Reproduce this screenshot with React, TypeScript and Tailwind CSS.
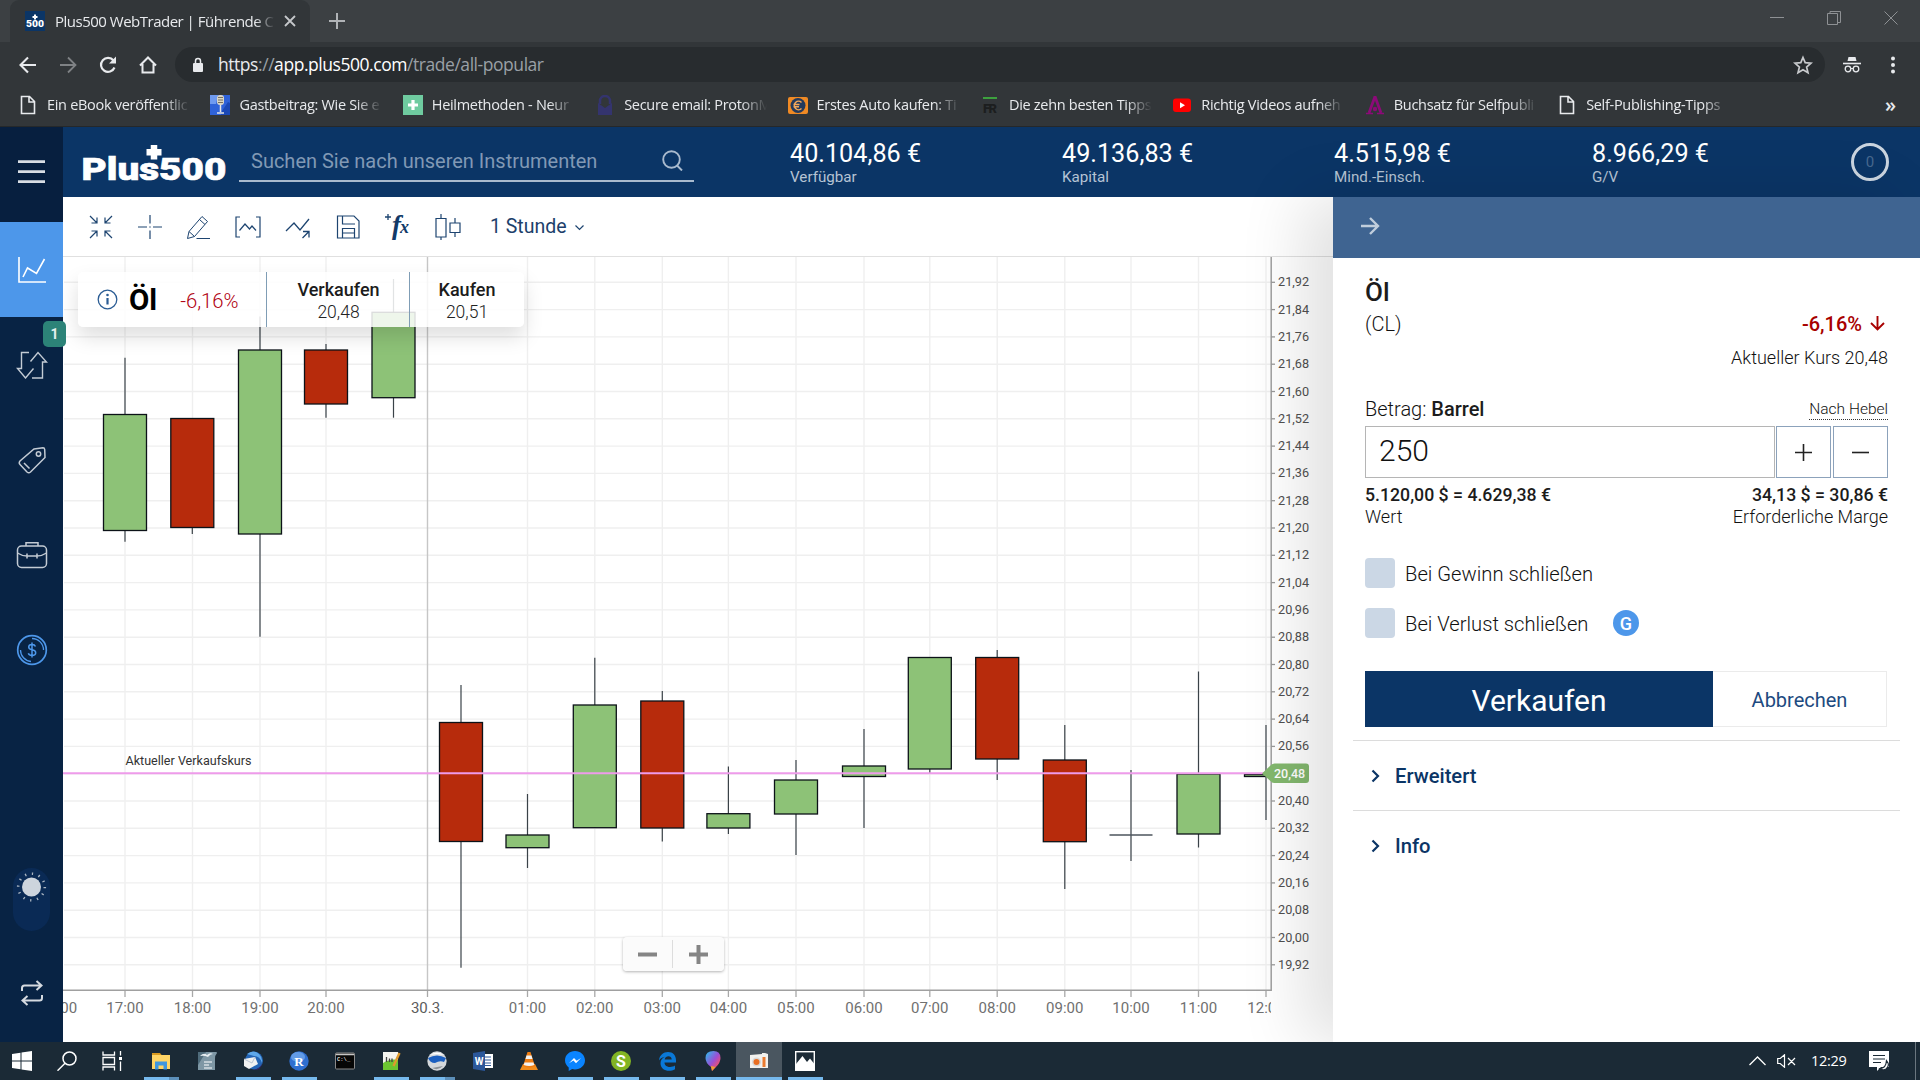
import React from "react";

type Candle = { x: number; top: number; bot: number; high: number; low: number; up: boolean };

const candles: Candle[] = [
  { x: 125, top: 414.5, bot: 530.5, high: 357.7, low: 541.7, up: true },
  { x: 192.3, top: 418.5, bot: 527.5, high: 418.5, low: 534, up: false },
  { x: 260, top: 350, bot: 534, high: 316.5, low: 636.7, up: true },
  { x: 326, top: 350, bot: 404, high: 344, low: 417.7, up: false },
  { x: 393.5, top: 312.3, bot: 397.7, high: 279, low: 417.7, up: true },
  { x: 461, top: 722.5, bot: 841.5, high: 685, low: 967.7, up: false },
  { x: 527.5, top: 835, bot: 847.7, high: 794, low: 868, up: true },
  { x: 594.8, top: 705, bot: 827.7, high: 657.7, low: 827.7, up: true },
  { x: 662.3, top: 701, bot: 828, high: 691, low: 841.5, up: false },
  { x: 728.4, top: 813.7, bot: 828, high: 766.5, low: 834, up: true },
  { x: 796, top: 780, bot: 814, high: 760, low: 855, up: true },
  { x: 864, top: 766, bot: 776.5, high: 729, low: 828, up: true },
  { x: 929.8, top: 657.5, bot: 769, high: 657.5, low: 773, up: true },
  { x: 997.2, top: 657.5, bot: 759, high: 650, low: 780, up: false },
  { x: 1064.8, top: 760, bot: 841.7, high: 725, low: 889, up: false },
  { x: 1131, top: 835, bot: 835, high: 770, low: 861, up: true },
  { x: 1198.5, top: 774, bot: 834, high: 671.5, low: 847.5, up: true },
  { x: 1266, top: 774.5, bot: 776.5, high: 725, low: 820, up: true },
];

const hours: [number, string][] = [
  [58.5, "16:00"], [125, "17:00"], [192.5, "18:00"], [260, "19:00"], [326, "20:00"], [427.5, "30.3."],
  [527.5, "01:00"], [594.8, "02:00"], [662.3, "03:00"], [728.4, "04:00"], [796, "05:00"],
  [864, "06:00"], [929.8, "07:00"], [997.2, "08:00"], [1064.8, "09:00"], [1131, "10:00"],
  [1198.5, "11:00"], [1266, "12:00"],
];

const prices = Array.from({ length: 26 }, (_, i) => ({
  y: 282.3 + i * 27.3,
  label: (21.92 - i * 0.08).toFixed(2).replace(".", ","),
}));

function Chart() {
  return (
    <svg width="1270" height="785" viewBox="63 257 1270 785" className="block" fontFamily="Roboto, sans-serif">
      <defs>
        <clipPath id="plot"><rect x="63" y="257" width="1208" height="785" /></clipPath>
      </defs>
      <g clipPath="url(#plot)">
        {prices.map((p) => (
          <line key={p.label} x1="64" x2="1271" y1={p.y} y2={p.y} stroke="#efefef" strokeWidth="1.4" />
        ))}
        {hours.slice(1).map(([x, l]) => (
          <line key={l} x1={x} x2={x} y1="257" y2="990" stroke={l === "30.3." ? "#c6c6c6" : "#efefef"} strokeWidth="1.4" />
        ))}
        {hours.slice(1).map(([x, l]) => (
          <line key={l} x1={x} x2={x} y1="990" y2="997" stroke="#a8a8a8" strokeWidth="1.3" />
        ))}
        {hours.map(([x, l]) => (
          <text key={l} x={x} y="1013" fontSize="15" textAnchor="middle" fill={l === "30.3." ? "#5c5c5c" : "#707070"}>{l}</text>
        ))}
        {candles.map((c) => (
          <g key={c.x} stroke="#0c1218">
            <line x1={c.x} x2={c.x} y1={c.high} y2={c.low} strokeWidth="1.2" stroke="#3a4248" />
            {c.top === c.bot ? (
              <line x1={c.x - 21.5} x2={c.x + 21.5} y1={c.top} y2={c.top} strokeWidth="1.4" stroke="#4d555c" />
            ) : (
              <rect x={c.x - 21.5} y={c.top} width="43" height={c.bot - c.top} fill={c.up ? "#8dc277" : "#b72b0c"} strokeWidth="1.3" />
            )}
          </g>
        ))}
        <line x1="63" x2="1271" y1="773.3" y2="773.3" stroke="#ee9bea" strokeWidth="2.1" />
      </g>
      <text x="125.5" y="765" fontSize="12.5" fill="#333" textLength="126" lengthAdjust="spacingAndGlyphs">Aktueller Verkaufskurs</text>
      <path d="M63 990.3H1271.2V257" fill="none" stroke="#a0a0a0" strokeWidth="1.5" />
      {prices.map((p) => (
        <g key={p.label}>
          <line x1="1271" x2="1275" y1={p.y} y2={p.y} stroke="#9a9a9a" strokeWidth="1.3" />
          {p.label !== "20,48" && <text x="1278" y={p.y + 4} fontSize="12.7" fill="#505050">{p.label}</text>}
        </g>
      ))}
      <path d="M1262 773.5l9-8.5q1.500-1.500 3.500-1.500h31.500q3 0 3 3v13.500q0 3-3 3h-31.500q-2 0-3.500-1.500z" fill="#83b86e" />
      <text x="1274" y="778" fontSize="12.500" fontWeight="500" fill="#fff">20,48</text>
    </svg>
  );
}

function Ico({ children, w = 26, h = 26, sw = 1.3, color = "#1d4470" }: { children: React.ReactNode; w?: number; h?: number; sw?: number; color?: string }) {
  return (
    <svg width={w} height={h} viewBox={`0 0 ${w} ${h}`} fill="none" stroke={color} strokeWidth={sw} className="shrink-0">
      {children}
    </svg>
  );
}

const tools: [string, React.ReactNode][] = [
  ["w-[48.5px]", <Ico><path d="M2 2l6.500 6.500M9 3.500v5.500H3.500M24 2l-6.500 6.500M17 3.500v5.500H22.500M2 24l6.500-6.500M3.500 17h5.500V22.500M24 24l-6.500-6.500M22.500 17h-5.500V22.500" strokeWidth="1.200" /></Ico>],
  ["w-[48.5px]", <Ico><path d="M13 1v8.500M13 16.500V25M1 13h9M16 13h9M12.300 13h1.400" strokeWidth="1.200" /></Ico>],
  ["w-[48.5px]", <Ico><path d="M4 17.500L17 2.500l5.500 5L9.500 22.500l-7 2zM14.500 5.500l5.500 5M4 17.500l5.500 5M11.500 24.500H25" strokeWidth="1" /></Ico>],
  ["w-[50px]", <Ico><path d="M5 3H1v20h4M21 3h4v20h-4M4.500 16.500l5.500-6.500 4.500 5 2.500-3 4 4.500" strokeWidth="1.200" /></Ico>],
  ["w-[50px]", <Ico><path d="M1 17l8-8 6 7L24 5M17.500 24l6-6M18 17.500h6V23.500" /></Ico>],
  ["w-[50px]", <Ico><path d="M2.500 2h16.500l5 5v17H2.500zM7.500 2v8h12.500M7.500 24v-9.500h12V24M7.500 19h12" strokeWidth="1.200" /></Ico>],
  ["w-[50px]", <svg width="28" height="28" viewBox="0 0 28 28" className="shrink-0">
    <path d="M4 1v6M1 4h6" stroke="#1d4470" strokeWidth="1.300" />
    <text x="8" y="21" fontFamily="Liberation Serif, serif" fontStyle="italic" fontWeight="700" fontSize="27" fill="#123a68">f</text>
    <text x="16" y="20" fontFamily="Liberation Serif, serif" fontStyle="italic" fontWeight="700" fontSize="18" fill="#123a68">x</text>
  </svg>],
  ["w-[50px]", <Ico w={28}><path d="M2 4.500h10v18.500H2zM7 0v4.500M7 23v3.500M16 9h10v9.500H16zM21 4v5M21 18.500V23" strokeWidth="1.200" /></Ico>],
];

const doc = (
  <svg width="20" height="20" viewBox="0 0 20 20" fill="none" stroke="#e8eaed" strokeWidth="1.600"><path d="M3.500 1.500h8l5 5v12h-13zM11 1.500v5.500h5.500" /></svg>
);

const bookmarks: [React.ReactNode, string][] = [
  [doc, "Ein eBook veröffentlic"],
  [<svg width="20" height="20" viewBox="0 0 20 20"><rect width="20" height="20" fill="#2f62d8" /><path d="M0 0h8L6 9H0z" fill="#6f9af0" /><path d="M12 16l6-9 2 1v12h-9z" fill="#1b48b5" /><rect x="7" y="0" width="7" height="10" rx="3" fill="#d9d5c6" /><path d="M8 2.500h5M8 5h5M8 7.500h5" stroke="#77705f" /><path d="M10.500 10v7M7 18h7" stroke="#e3e3e3" strokeWidth="1.500" /></svg>, "Gastbeitrag: Wie Sie e"],
  [<svg width="20" height="20" viewBox="0 0 20 20"><rect width="20" height="20" fill="#6fcba0" /><path d="M10 5v10M5 10h10" stroke="#fff" strokeWidth="3.200" /></svg>, "Heilmethoden - Neur"],
  [<svg width="20" height="20" viewBox="0 0 20 20"><path d="M5 9V6a5 5 0 0110 0v3" fill="none" stroke="#34346e" strokeWidth="2.500" /><path d="M3 8l7 5 7-5v12H3z" fill="#34346e" /></svg>, "Secure email: ProtonM"],
  [<svg width="20" height="20" viewBox="0 0 20 20"><rect y="2" width="20" height="17" rx="2" fill="#f08a24" /><circle cx="10" cy="10.500" r="7.500" fill="#243a5c" /><path d="M13.500 7.500a4.200 4.200 0 100 6M5.500 9.500h6M5.500 11.700h5.500" fill="none" stroke="#f3a75a" strokeWidth="1.500" /></svg>, "Erstes Auto kaufen: Ti"],
  [<svg width="20" height="20" viewBox="0 0 20 20"><path d="M3 3h14" stroke="#3fae3f" strokeWidth="1.800" /><text x="3" y="17.500" fontFamily="Roboto" fontWeight="900" fontSize="13" fill="#1c1e1f" textLength="14">FR</text></svg>, "Die zehn besten Tipps"],
  [<svg width="20" height="20" viewBox="0 0 20 20"><rect x="1" y="3.500" width="18" height="13.500" rx="3" fill="#f00" /><path d="M8 7.200l5 3-5 3z" fill="#fff" /></svg>, "Richtig Videos aufneh"],
  [<svg width="20" height="20" viewBox="0 0 20 20"><path d="M10 1.500L4 18M10 1.500L16 18" stroke="#8c0a78" strokeWidth="2.800" /><path d="M1 18.500h7M12 18.500h7" stroke="#8c0a78" strokeWidth="1.500" /><circle cx="10" cy="14" r="2.200" fill="#8c0a78" /></svg>, "Buchsatz für Selfpubli"],
  [doc, "Self-Publishing-Tipps"],
];

function Browser() {
  return (
    <div className="flex h-[127px] flex-col bg-[#323639] font-['Open_Sans',sans-serif] text-[#e8eaed]">
      <div className="flex h-[42px] shrink-0 items-stretch bg-[#3c4043] pl-[10px]">
        <div className="flex w-[300px] items-center rounded-t-[9px] bg-[#323639] pl-[15px]">
          <svg width="20" height="20" viewBox="0 0 20 20" className="shrink-0">
            <rect width="20" height="20" fill="#0b3566" />
            <path d="M10 3.500v5M7.500 6h5" stroke="#fff" strokeWidth="2" />
            <text x="1" y="15.500" fontSize="9" fontWeight="900" fontFamily="Roboto" fill="#fff" textLength="18" lengthAdjust="spacingAndGlyphs">500</text>
          </svg>
          <div className="ml-[10px] w-[220px] whitespace-nowrap text-[15px] tracking-[-0.5px] [mask-image:linear-gradient(90deg,#000_91%,transparent)]">Plus500 WebTrader | Führende CF</div>
          <svg width="12" height="12" viewBox="0 0 12 12" className="ml-[9px]" stroke="#c5c7ca" strokeWidth="1.800"><path d="M1 1l10 10M11 1L1 11" /></svg>
        </div>
        <div className="flex w-[54px] items-center justify-center">
          <svg width="16" height="16" viewBox="0 0 16 16" stroke="#b0b3b6" strokeWidth="2"><path d="M8 0v16M0 8h16" /></svg>
        </div>
        <div className="ml-auto flex h-[36px] items-center gap-[43px] pr-[22px]">
          <svg width="14" height="14" viewBox="0 0 14 14" stroke="#8e9194"><path d="M0 6.500h14" /></svg>
          <svg width="14" height="14" viewBox="0 0 14 14" stroke="#8e9194" fill="none"><path d="M.5 2.500h10v11H.5zM3 2.500v-2h10.500v11h-3" /></svg>
          <svg width="14" height="14" viewBox="0 0 14 14" stroke="#8e9194"><path d="M.5.5l13 13M13.500.5l-13 13" /></svg>
        </div>
      </div>
      <div className="flex h-[45px] shrink-0 items-center">
        <div className="flex w-[175px] items-center gap-[20px] pl-[18px]">
          <svg width="20" height="20" viewBox="0 0 20 20" fill="none" stroke="#e8eaed" strokeWidth="2.100"><path d="M18 10H3M10 2.500L2.500 10l7.500 7.500" /></svg>
          <svg width="20" height="20" viewBox="0 0 20 20" fill="none" stroke="#7f8285" strokeWidth="1.800"><path d="M2 10h15M10 2.500l7.500 7.500-7.500 7.500" /></svg>
          <svg width="20" height="20" viewBox="0 0 20 20" fill="none" stroke="#e8eaed" strokeWidth="2.200"><path d="M16.500 12.500A7 7 0 1115.500 5.500" /><path d="M18 1.500v7h-7z" fill="#e8eaed" stroke="none" /></svg>
          <svg width="20" height="20" viewBox="0 0 20 20" fill="none" stroke="#e8eaed" strokeWidth="2"><path d="M2 10.500L10 2.500l8 8M4.500 9v8.500h11V9" /></svg>
        </div>
        <div className="flex h-[35px] w-[1650px] items-center rounded-full bg-[#282c2f] pl-[17px] pr-[12px]">
          <svg width="12" height="16" viewBox="0 0 12 16"><rect x="1" y="6" width="10" height="9" rx="1" fill="#e8eaed" /><path d="M3.500 6.500V4a2.500 2.500 0 015 0v2.500" fill="none" stroke="#e8eaed" strokeWidth="1.500" /></svg>
          <div className="ml-[14px] whitespace-nowrap text-[17.500px] tracking-[-0.450px] text-[#9aa0a6]"><span className="text-[#e8eaed]">https</span>://<span className="text-white">app.plus500.com</span>/trade/all-popular</div>
          <svg width="20" height="20" viewBox="0 0 20 20" className="ml-auto" fill="none" stroke="#c8cacd" strokeWidth="1.700"><path d="M10 2.500l2.200 5.200 5.800.5-4.400 3.800 1.400 5.700L10 14.700l-5 3 1.400-5.700L2 8.200l5.800-.5z" /></svg>
        </div>
        <div className="flex flex-1 items-center pl-[18px]">
          <svg width="18" height="18" viewBox="0 0 18 18" fill="none" stroke="#e8eaed"><path d="M5.500 1h7l1 4h-9z" fill="#e8eaed" stroke="none" /><path d="M0 7.500h18" strokeWidth="1.600" /><circle cx="5" cy="13" r="2.800" strokeWidth="1.300" /><circle cx="13" cy="13" r="2.800" strokeWidth="1.300" /><path d="M8 12.500h2" /></svg>
          <svg width="4" height="18" viewBox="0 0 4 18" className="ml-[30px]" fill="#e8eaed"><circle cx="2" cy="2.500" r="2" /><circle cx="2" cy="9" r="2" /><circle cx="2" cy="15.500" r="2" /></svg>
        </div>
      </div>
      <div className="flex flex-1 items-center border-b border-[#25282a] pb-[4px] pl-[18px]">
        {bookmarks.map(([icon, label]) => (
          <div key={label} className="flex w-[192.400px] items-center gap-[9px]">
            <div className="w-5 shrink-0">{icon}</div>
            <div className="w-[146px] whitespace-nowrap text-[14.500px] tracking-[-0.300px] [mask-image:linear-gradient(90deg,#000_80%,transparent_98%)]">{label}</div>
          </div>
        ))}
        <div className="ml-auto pr-[24px] text-[20px] font-semibold leading-none">»</div>
      </div>
    </div>
  );
}

function Sidebar() {
  return (
    <div className="flex w-[63px] shrink-0 flex-col bg-[#082344]">
      <div className="flex h-[95px] shrink-0 flex-col items-center bg-[#071f3f] pt-[33px]">
        <svg width="27" height="24" viewBox="0 0 27 24" stroke="#d8dde3" strokeWidth="2.800"><path d="M0 1.700h27M0 11.700h27M0 21.700h27" /></svg>
      </div>
      <div className="flex h-[95px] shrink-0 items-center justify-center bg-[#4d97ea]">
        <Ico w={30} color="#fff" sw={1.600}><path d="M2 0v25h27M6 20l4.500-9 9 5.500L27.500 2" /></Ico>
      </div>
      <div className="relative flex h-[95px] shrink-0 items-center justify-center">
        <Ico w={32} h={28} color="#c3cbd4" sw={1.400}><path d="M13 1.500H5.500V17.500H1.500l8 9.500 8-9.500M14.500 10.500l7.500-9 8.500 9.500H26.500V27H16" /></Ico>
        <div className="absolute left-[43px] top-[4px] z-10 flex h-[26px] w-[23px] items-center justify-center rounded-[5px] bg-[#2c8378] text-[14px] font-bold text-[#e4f1ee]">1</div>
      </div>
      <div className="flex h-[95px] shrink-0 items-center justify-center">
        <Ico w={30} h={28} color="#c3cbd4" sw={1.500}><path d="M17 3l9-1.200q1.500 0 1.700 1.700L28 11.500 13.500 26q-1.700 1.500-3.500 0L3 18.500q-1.500-1.500 0-3.500zM7 17l5.500 5.500" /><circle cx="21.500" cy="8" r="2.200" /></Ico>
      </div>
      <div className="flex h-[95px] shrink-0 items-center justify-center">
        <Ico w={32} h={28} color="#c3cbd4" sw={1.500}><rect x="1.500" y="5" width="29" height="21.500" rx="4" /><path d="M10 5V1.800h12V5M1.500 12q4.500 3 9.500 3h10q5 0 9.500-3M11 12.500v5M21 12.500v5" /></Ico>
      </div>
      <div className="flex h-[95px] shrink-0 items-center justify-center">
        <Ico w={32} h={32} color="#4d97ea" sw={1.700}><circle cx="16" cy="16" r="14.300" /><path d="M16 4.500A11.500 11.500 0 0127.500 16M15 27.500A11.500 11.500 0 014.500 16" strokeWidth="1.300" /><path d="M19.500 12.500q-.8-2-3.500-2-3.300 0-3.300 2.600 0 2.200 3.300 2.700 3.700.6 3.700 3 0 2.700-3.700 2.700-2.900 0-3.700-2.200M16 8.500v15" strokeWidth="1.500" /></Ico>
      </div>
      <div className="mx-auto mt-[171px] flex h-[63px] w-[37px] shrink-0 justify-center rounded-full bg-[#0a2a55] pt-[3px]">
        <svg width="31" height="32" viewBox="0 0 31 32"><circle cx="15.500" cy="16" r="9.500" fill="#cdd4dd" /><circle cx="15.500" cy="16" r="13.300" fill="none" stroke="#aab5c2" strokeWidth="2.600" strokeDasharray="1.300 5.660" /></svg>
      </div>
      <div className="flex justify-center pt-[49px]">
        <Ico w={24} color="#d5dae0" sw={2}><path d="M2 11V8q0-2.500 2.500-2.500H21M16.500 1l5 4.500-5 4.500M22 15v3q0 2.500-2.500 2.500H3M7.500 16l-5 4.500 5 4.500" /></Ico>
      </div>
    </div>
  );
}

const stats: [string, string, string][] = [
  ["40.104,86 €", "Verfügbar", "w-[272px]"],
  ["49.136,83 €", "Kapital", "w-[272px]"],
  ["4.515,98 €", "Mind.-Einsch.", "w-[258px]"],
  ["8.966,29 €", "G/V", "w-[258px]"],
];

function Header() {
  return (
    <div className="flex h-[70px] shrink-0 bg-[#0b3566]">
      <svg width="176" height="70" viewBox="63 127 176 70" className="shrink-0">
        <text x="81.500" y="179.700" fontFamily="Roboto, sans-serif" fontWeight="900" fontSize="31.500" fill="#fff" stroke="#fff" strokeWidth=".6" textLength="145" lengthAdjust="spacingAndGlyphs">Plus500</text>
        <path d="M154 145v14.500M146.500 152.300h15" stroke="#fff" strokeWidth="6.500" />
      </svg>
      <div className="mb-[15px] flex w-[455px] items-center border-b-2 border-[#a9bace] pl-[12px] pr-[11px] pt-[14px]">
        <span className="pt-px text-[20px] text-[#8199b5]">Suchen Sie nach unseren Instrumenten</span>
        <svg width="21" height="21" viewBox="0 0 21 21" fill="none" stroke="#a9bace" strokeWidth="1.900" className="ml-auto"><circle cx="9.500" cy="9.500" r="8.300" /><path d="M14.500 15l5.500 5.500" /></svg>
      </div>
      <div className="flex pl-[96px]">
        {stats.map(([v, l, w]) => (
          <div key={l} className={`${w} whitespace-nowrap pt-[12px]`}>
            <div className="text-[25.200px] leading-[29px] text-white">{v}</div>
            <div className="text-[15.200px] leading-[18px] text-[#b5c3d4]">{l}</div>
          </div>
        ))}
      </div>
      <div className="ml-auto mr-[31px] mt-[16px] flex h-[38px] w-[38px] items-center justify-center rounded-full border-[3px] border-[#cbd5e0] text-[15px] text-[#47698f]">0</div>
    </div>
  );
}

function PriceCard() {
  return (
    <div className="absolute left-[15px] top-[15px] flex h-[55px] w-[446px] rounded-[5px] bg-white/85 shadow-[0_10px_20px_rgba(0,0,0,0.13)]">
      <div className="flex w-[189px] items-center border-r border-[#7f9db5] pl-[19px]">
        <svg width="21" height="21" viewBox="0 0 21 21" fill="none" stroke="#2a5c94" strokeWidth="1.300"><circle cx="10.500" cy="10.500" r="9.300" /><path d="M10.500 9v6.500" strokeWidth="2.200" /><circle cx="10.500" cy="6" r="1.300" fill="#2a5c94" stroke="none" /></svg>
        <span className="ml-[11px] pt-px text-[29.500px] font-bold text-black">Öl</span>
        <span className="ml-[23px] pt-[3px] text-[20.300px] font-light text-[#b00010]">-6,16%</span>
      </div>
      <div className="flex w-[143px] flex-col items-center border-r border-[#7f9db5] pl-px pt-[6px] leading-[23px] text-[#1c1c1c]">
        <span className="text-[18px] font-medium">Verkaufen</span>
        <span className="text-[17.500px] font-light text-[#222]">20,48</span>
      </div>
      <div className="flex flex-1 flex-col items-center pt-[6px] leading-[23px] text-[#1c1c1c]">
        <span className="text-[18px] font-medium">Kaufen</span>
        <span className="text-[17.500px] font-light text-[#222]">20,51</span>
      </div>
    </div>
  );
}

function ChartArea() {
  return (
    <div className="w-[1270px] shrink-0 bg-white">
      <div className="flex h-[60px] items-center border-b border-[#e0e0e0] pl-[14px]">
        {tools.map(([w, t], i) => (
          <div key={i} className={`${w} flex justify-center`}>{t}</div>
        ))}
        <span className="ml-[17.500px] text-[19.500px] text-[#1d3f6b]">1 Stunde</span>
        <svg width="9" height="6" viewBox="0 0 9 6" fill="none" stroke="#1d4470" strokeWidth="1.200" className="ml-[8px] mt-[3px]"><path d="M.5.5l4 4 4-4" /></svg>
      </div>
      <div className="relative h-[785px]">
        <Chart />
        <PriceCard />
        <div className="absolute left-[560px] top-[680px] flex h-[34px] w-[101px] items-center rounded-[4px] bg-[#fbfbfb]/95 shadow-[0_1px_3px_rgba(0,0,0,0.3)]">
          <div className="flex h-[28px] w-[50px] items-center justify-center border-r border-[#ddd]">
            <svg width="19" height="19" viewBox="0 0 19 19" stroke="#858585" strokeWidth="4"><path d="M0 9.500h19" /></svg>
          </div>
          <div className="flex flex-1 items-center justify-center">
            <svg width="19" height="19" viewBox="0 0 19 19" stroke="#858585" strokeWidth="4"><path d="M0 9.500h19M9.500 0v19" /></svg>
          </div>
        </div>
      </div>
    </div>
  );
}

function Expander({ label }: { label: string }) {
  return (
    <div className="flex h-[70px] items-center border-t border-[#dcdcdc] pl-[18px] text-[20.200px] font-medium text-[#0b3566]">
      <svg width="9" height="14" viewBox="0 0 9 14" fill="none" stroke="#0b3566" strokeWidth="2.200"><path d="M1.500 1.500L7 7l-5.500 5.500" /></svg>
      <span className="ml-[15px] pt-[2px]">{label}</span>
    </div>
  );
}

function OrderPanel() {
  return (
    <div className="relative flex-1 bg-white font-light text-[#111] shadow-[-30px_0_60px_rgba(0,0,0,0.12)]">
      <div className="flex h-[61px] items-center bg-[#3f6491] pl-[28px] pb-[4px]">
        <svg width="19" height="18" viewBox="0 0 19 18" fill="none" stroke="#c0cddc" strokeWidth="2.400"><path d="M0 9h17M9 1l8 8-8 8" /></svg>
      </div>
      <div className="pl-[32px] pr-[32px]">
        <div className="mt-[18px] flex h-[32px] items-center text-[26px] font-medium text-[#1c1c1c]">Öl</div>
        <div className="flex h-[32px] items-center justify-between text-[20px]">
          <span>(CL)</span>
          <span className="flex items-center font-medium text-[#a80000]">-6,16%
            <svg width="15" height="15" viewBox="0 0 15 15" fill="none" stroke="#a80000" strokeWidth="1.900" className="mb-[2px] ml-[8px] mr-[3px]"><path d="M7.500 0v13M1 7l6.500 6.500L14 7" /></svg>
          </span>
        </div>
        <div className="flex h-[35px] items-center justify-end text-[18px]">Aktueller Kurs 20,48</div>
        <div className="mt-[15px] flex h-[36px] items-center justify-between pt-px text-[20px]">
          <span>Betrag: <b className="font-medium text-[#1c1c1c]">Barrel</b></span>
          <span className="mt-[3px] border-b border-dotted border-[#333] text-[15.500px] leading-[19px]">Nach Hebel</span>
        </div>
        <div className="flex h-[52px] text-[#111]">
          <div className="flex w-[410px] items-center border border-[#b5b5b5] pl-[13px] pb-[4px] text-[30px]">250</div>
          <div className="ml-[1px] flex w-[55px] items-center justify-center border border-[#8ca2bb]">
            <svg width="17" height="17" viewBox="0 0 17 17" stroke="#222" strokeWidth="1.600"><path d="M0 8.500h17M8.500 0v17" /></svg>
          </div>
          <div className="ml-[2px] flex w-[55px] items-center justify-center border border-[#8ca2bb]">
            <svg width="17" height="17" viewBox="0 0 17 17" stroke="#222" strokeWidth="1.600"><path d="M0 8.500h17" /></svg>
          </div>
        </div>
        <div className="mt-[6px] flex h-[22px] items-center justify-between pt-px text-[17.700px] font-medium text-[#1c1c1c]">
          <span>5.120,00 $ = 4.629,38 €</span>
          <span>34,13 $ = 30,86 €</span>
        </div>
        <div className="flex h-[20px] items-center justify-between text-[18px]">
          <span>Wert</span>
          <span>Erforderliche Marge</span>
        </div>
        <div className="mt-[32px] flex h-[30px] items-center text-[20.200px]">
          <div className="h-[30px] w-[30px] rounded-[4px] bg-[#cbd7e5]" />
          <span className="ml-[10px] pt-[3px]">Bei Gewinn schließen</span>
        </div>
        <div className="mt-[20px] flex h-[30px] items-center text-[20.200px]">
          <div className="h-[30px] w-[30px] rounded-[4px] bg-[#cbd7e5]" />
          <span className="ml-[10px] w-[186px] whitespace-nowrap pt-[3px]">Bei Verlust schließen</span>
          <div className="ml-[22px] flex h-[26px] w-[26px] items-center justify-center rounded-full bg-[#4d97ea] text-[18px] font-medium text-white">G</div>
        </div>
        <div className="mt-[33px] flex h-[56px]">
          <div className="flex w-[348px] items-center justify-center bg-[#0b3566] pt-[2px] text-[30px] font-normal text-white">Verkaufen</div>
          <div className="mr-px flex flex-1 items-center justify-center border border-l-0 border-[#ebebeb] pt-px text-[20px] font-normal text-[#1d4a80]">Abbrechen</div>
        </div>
      </div>
      <div className="mx-[20px] mt-[13px]">
        <Expander label="Erweitert" />
        <Expander label="Info" />
      </div>
    </div>
  );
}

type Task = { icon: React.ReactNode; line?: "full" | "split"; active?: boolean };
const S = ({ children }: { children: React.ReactNode }) => (
  <svg width="20" height="20" viewBox="0 0 20 20">{children}</svg>
);

const tasks: Task[] = [
  { line: "split", icon: <S><path d="M1 2h8l2 2.500H1z" fill="#d99a20" /><path d="M1 4h18v14H1z" fill="#ffd566" /><path d="M4 18.500v-8h12v8h-3.500v-4h-5v4z" fill="#3f97e0" /></S> },
  { icon: <S><path d="M1 1h18q1 0 1 1-2 2-2 6v11H1z" fill="#7e97a5" /><path d="M1 1h8L1 14z" fill="#4f6b7b" /><path d="M3 5q4-4 7-1 3-3 6-1-3 0-5 3-4-2-8-1z" fill="#e8eef2" /><path d="M7 11h8M7 14h5M7 17h8" stroke="#d5dee4" strokeWidth="1.400" /></S> },
  { line: "full", icon: <S><circle cx="11" cy="9.500" r="9" fill="#2464b4" /><path d="M4 3q6-5 12 0 4 4 3 9-2-7-8-7z" fill="#5fa8ea" /><path d="M1 8l11-2 3 7-9 5-5-3z" fill="#f1f1f1" /><path d="M1 8l8 4 3-6" fill="none" stroke="#b9c4d2" /><path d="M8 18.500q8 1 11-6-1 8-11 6z" fill="#36246c" /></S> },
  { line: "full", icon: <S><circle cx="10" cy="10" r="9.700" fill="#2f6fd0" /><ellipse cx="9" cy="6" rx="7" ry="5" fill="#78aef0" opacity=".7" /><text x="10" y="14.500" fontFamily="Liberation Serif" fontWeight="700" fontSize="13" textAnchor="middle" fill="#fff">R</text></S> },
  { icon: <S><rect x=".5" y="2" width="19" height="16" rx="1" fill="#060606" stroke="#8a8a8a" /><path d="M1 3.500h18" stroke="#c5c5c5" strokeWidth="1.500" /><text x="2" y="10" fontFamily="Liberation Mono" fontSize="5.500" fontWeight="700" fill="#ddd">C:\_</text></S> },
  { line: "full", icon: <S><path d="M2 1h15v18H2z" fill="#f5f5f0" /><path d="M2 12q8-5 15-3v10H2z" fill="#6cc531" /><path d="M5.500 6v5M8.500 7.500v3.500M11 7.500v3.500" stroke="#444" strokeWidth="1.300" /><path d="M18.500 2l-6 13" stroke="#e09a2c" strokeWidth="2.400" /></S> },
  { line: "split", icon: <S><circle cx="10" cy="10" r="9.700" fill="#d4d8dc" /><path d="M1 7q9-5 18 0l-2 4q-4-2-9 1-5 0-7-5z" fill="#1b5fc0" /><path d="M3 4q7-5 14 0-7-1.500-14 0z" fill="#fff" /><path d="M5 17q6 3 11-2-6 1-11 2z" fill="#8c9298" /></S> },
  { icon: <S><path d="M9 3h11v14H9z" fill="#fff" /><path d="M12 6h6M12 9h6M12 12h6M12 14.500h6" stroke="#2b579a" strokeWidth="1.200" /><path d="M0 2l12-2v20L0 18z" fill="#2b579a" /><text x="6" y="14" fontFamily="Roboto" fontWeight="700" fontSize="10" textAnchor="middle" fill="#fff">W</text></S> },
  { icon: <S><path d="M4 13h12l3 6H1z" fill="#f28c1c" /><path d="M8.500 1h3L16 15q-6 3-12 0z" fill="#f07d12" /><path d="M7.500 4.500h5l1 3.500h-7zM5.500 11.500h9l.8 2.500q-5 2-10.600 0z" fill="#f3f3f3" /></S> },
  { line: "full", icon: <S><path d="M10 0C4.500 0 0 4 0 9.300c0 3 1.500 5.500 3.700 7.200V20l3.400-1.900c.9.300 1.900.4 2.900.4 5.500 0 10-4 10-9.200S15.500 0 10 0z" fill="#0a84ff" /><path d="M4 12.200L9 7l2.700 2.700L16 7l-5 5.200-2.600-2.700z" fill="#fff" /></S> },
  { line: "full", icon: <S><circle cx="10" cy="10" r="10" fill="#82b423" /><text x="10" y="15.500" fontFamily="Roboto" fontWeight="700" fontSize="16" textAnchor="middle" fill="#fff">S</text></S> },
  { line: "full", icon: <S><path d="M2 9.500C2.500 4 6.500 1 11 1c5 0 8 3.500 8 8.200V11.500H7.500c0 5 7 5.500 10.500 3V18.200c-6 3.300-14.500 1.300-14.500-6 0-3.200 1.800-5.400 4.500-6.500-2.500.3-4.700 1.500-6 3.800zM7.700 8.500h7C14.700 4 8.200 4.500 7.700 8.500z" fill="#0a78d7" fillRule="evenodd" /></S> },
  { line: "full", icon: <S><defs><linearGradient id="balloon" x1="0" y1="0" x2="1" y2="1"><stop offset="0" stopColor="#23c4ee" /><stop offset=".5" stopColor="#9a4fd6" /><stop offset=".8" stopColor="#f0506a" /></linearGradient></defs><path d="M10.500 0q7 0 7 7 0 5-5 9.500L9 20l-1-4Q2.500 12 2.500 7q0-7 8-7z" fill="url(#balloon)" /><path d="M8 15l4.500 1L9 20z" fill="#f0a02c" /></S> },
  { line: "full", active: true, icon: <S><path d="M1 4l12-1v-1h3l3 1v14H1z" fill="#f1f1ee" /><circle cx="7.500" cy="11" r="4.500" fill="#d8d8d8" /><circle cx="7.500" cy="11" r="3" fill="#e86e22" /><rect x="13.500" y="6" width="3" height="10" fill="#ea7b30" /></S> },
  { line: "full", icon: <S><rect x=".7" y=".7" width="18.600" height="18.600" fill="#1b2a36" stroke="#fff" strokeWidth="1.400" /><path d="M1 13l6.500-8 4.500 6 3-3.500 4 5V19H1z" fill="#fff" /></S> },
];

function Taskbar() {
  return (
    <div className="relative z-20 flex h-[38px] shrink-0 bg-[#1b2a36]">
      <div className="flex w-[44px] items-center justify-center"><S><path d="M0 3l8.500-1.200v7.700H0zM9.500 1.600L20 0v9.500H9.500zM0 10.500h8.500v7.700L0 17zM9.500 10.500H20V20L9.500 18.400z" fill="#fff" /></S></div>
      <div className="flex w-[45px] items-center justify-center"><S><circle cx="12.500" cy="7.500" r="6.500" fill="none" stroke="#fff" strokeWidth="1.500" /><path d="M8 12.200L.5 19.700" stroke="#fff" strokeWidth="1.500" /></S></div>
      <div className="mr-[4px] flex w-[45px] items-center justify-center"><S><path d="M1 .5V4h11.500V.5M1 19.500V16h11.500v3.500M1 6.500h11.500v7H1zM18.500 0v4.500M18.500 10.500V20" fill="none" stroke="#fff" strokeWidth="1.300" /><rect x="17" y="6" width="3" height="3" fill="#fff" /></S></div>
      {tasks.map((t, i) => (
        <div key={i} className={t.active ? "flex w-[46px] flex-col items-center bg-[#4a5660]" : "flex w-[46px] flex-col items-center"}>
          <div className="flex h-[35px] items-center pt-[3px]">{t.icon}</div>
          {t.line && (
            <div className={t.active ? "flex h-[3px] w-full bg-[#76b9ed]" : "flex h-[3px] w-[35px] bg-[#76b9ed]"}>
              {t.line === "split" && <div className="ml-auto w-[10px] bg-[#5c8fb9]" />}
            </div>
          )}
        </div>
      ))}
      <div className="ml-auto flex items-center text-white">
        <svg width="17" height="10" viewBox="0 0 17 10" fill="none" stroke="#fff" strokeWidth="1.300"><path d="M.5 9l8-8 8 8" /></svg>
        <svg width="19" height="14" viewBox="0 0 19 14" fill="none" stroke="#fff" strokeWidth="1.200" className="ml-[11px]"><path d="M.7 4.500h2.500L7.500.8v12.400L3.200 9.500H.7zM11 4l7 7M18 4l-7 7" /></svg>
        <span className="ml-[15px] w-[36px] whitespace-nowrap font-['Open_Sans',sans-serif] text-[14.500px] tracking-[-0.300px]">12:29</span>
        <svg width="21" height="20" viewBox="0 0 21 20" className="ml-[22px]"><path d="M0 0h20v16h-8l-4 4v-4H0z" fill="#fff" /><path d="M4 4.500h12M4 8h12M4 11.500h8" stroke="#1b2a36" strokeWidth="1.200" /><path d="M17.500 9.500q4 5-.5 8.500-3 2-6-.5 6 0 6.500-8z" fill="#fff" stroke="#1b2a36" strokeWidth="1.200" /></svg>
        <div className="ml-[25px] mr-[4px] h-[38px] w-px bg-[#6b767f]" />
      </div>
    </div>
  );
}

export default function App() {
  return (
    <div className="flex h-[1080px] w-[1920px] flex-col overflow-hidden bg-white font-['Roboto',sans-serif]">
      <Browser />
      <div className="flex h-[915px] shrink-0">
        <Sidebar />
        <div className="flex flex-1 flex-col">
          <Header />
          <div className="flex h-[845px]">
            <ChartArea />
            <OrderPanel />
          </div>
        </div>
      </div>
      <Taskbar />
    </div>
  );
}
